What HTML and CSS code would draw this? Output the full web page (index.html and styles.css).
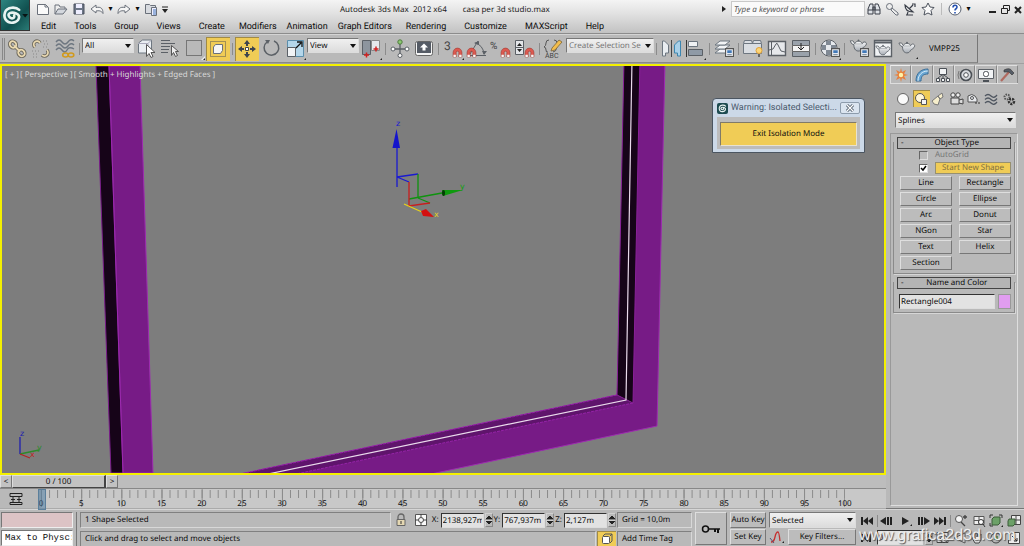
FILE: index.html
```html
<!DOCTYPE html>
<html lang="en">
<head>
<meta charset="utf-8">
<title>Autodesk 3ds Max 2012 x64 - casa per 3d studio.max</title>
<link rel="stylesheet" href="styles.css">
</head>
<body>
<svg class="defs" aria-hidden="true">
  <defs>
    <linearGradient id="steel" x1="0" y1="0" x2="0" y2="1"><stop offset="0" stop-color="#fff"/><stop offset="1" stop-color="#a6acb4"/></linearGradient>
    <symbol id="magnet" viewBox="0 0 10 10"><path d="M1 9V5a4 4 0 0 1 8 0v4H6.200V5a1.200 1.200 0 0 0-2.400 0v4z" fill="#dc5a50" stroke="#9c3029" stroke-width=".5"/><path d="M1.300 7h2.200V9H1.300zM6.500 7h2.200V9H6.500z" fill="#f4f4f4"/></symbol>
    <symbol id="teapot" viewBox="0 0 20 14"><path d="M5 6C2 6 2 3 1 2l3 0 2 3h8c1-3 5-2 4.500.5S15 9 14 10c-1 2-2 3-4 3s-5-1-5-7z" fill="url(#steel)" stroke="#5b6168"/><path d="M6 5c1-3.500 7-3.500 8 0" fill="#eef0f2" stroke="#5b6168"/><circle cx="10" cy="1.500" r="1" fill="#5b6168"/></symbol>
    <symbol id="swirl" viewBox="0 0 20 20"><path d="M17 4.500C14 1.500 5 1 3 7s2 11 8 10 8-7 3-9-9 0-7 3 6 2 5-1" fill="none" stroke="#e8f3f1" stroke-width="2.600" stroke-linecap="round"/></symbol>
    <symbol id="doc" viewBox="0 0 8 8"><path d="M.5.5h7v7h-7z" fill="#eef1f5" stroke="#555"/><path d="M2 2h4v2.500H2z" fill="#4279b8"/><path d="M2 6h4" stroke="#456" stroke-width=".7"/></symbol>
  </defs>
</svg>

<header class="header">
  <button class="app-button" aria-label="Application menu"><svg class="app-logo" viewBox="0 0 29 30"><use href="#swirl" x="1" y="5" width="21" height="21"/><path d="M22 14h6l-3 3.500z" fill="#081414"/></svg></button>
  <div class="header-main">
    <div class="title-row">
      <div class="quick">
        <button aria-label="New"><svg viewBox="0 0 16 16"><path d="M2.500 3.500h8l3 3v7h-11z" fill="#fafafa" stroke="#6a707a"/><path d="M10 3v3h3" fill="none" stroke="#6a707a"/></svg></button>
        <button aria-label="Open"><svg viewBox="0 0 16 16"><path d="M2 13V4h4l1 2h5v3" fill="#eee" stroke="#6a707a"/><path d="M2 13l3-5h9l-4 5z" fill="#d4d8de" stroke="#6a707a"/></svg></button>
        <button aria-label="Save"><svg viewBox="0 0 16 16"><path d="M3 3h10v10H3z" fill="#6c7686" stroke="#4a515e"/><path d="M5 3h6v4H5zM5 9h6v4H5z" fill="#eef"/></svg></button>
        <button aria-label="Undo"><svg viewBox="0 0 16 16"><path d="M2 8l5-4v2.500c5-1 7 1 7 6-2-3-4-3-7-2.500V12z" fill="#f6f6f6" stroke="#6a707a"/></svg></button>
        <button class="drop" aria-label="Undo list">▾</button>
        <button aria-label="Redo"><svg viewBox="0 0 16 16"><path d="M14 8L9 4v2.500c-5-1-7 1-7 6 2-3 4-3 7-2.500V12z" fill="#f6f6f6" stroke="#6a707a"/></svg></button>
        <button class="drop" aria-label="Redo list">▾</button>
        <button aria-label="Project folder"><svg viewBox="0 0 16 16"><path d="M2.500 3.500h4l1 1h5v8h-10z" fill="#d8dbe0" stroke="#6a707a"/><path d="M8.500 6.500h5v8h-5z" fill="#eef" stroke="#6a707a"/><path d="M10 9h3M10 11h3M10 13h3" stroke="#47b"/></svg></button>
        <button class="drop" aria-label="Customize quick access"><svg viewBox="0 0 10 16"><path d="M2 6h6" stroke="#222"/><path d="M2 8h6l-3 4z" fill="#222"/></svg></button>
      </div>
      <h1 class="title"><span>Autodesk 3ds Max&nbsp; 2012 x64</span><span>casa per 3d studio.max</span></h1>
      <div class="search">
        <svg class="search-arrow" viewBox="0 0 6 10"><path d="M1 2l4 3-4 3z" fill="#222"/></svg>
        <input class="search-box" type="text" placeholder="Type a keyword or phrase" aria-label="Search">
        <button aria-label="Find"><svg viewBox="0 0 16 16"><path d="M4 3h3v10H2V8zM9 3h3l2 5v5H9zM7 6h2v3H7z" fill="#dfe3e8" stroke="#3a3f49"/><path d="M2 9h5M9 9h5" stroke="#3a3f49"/></svg></button>
        <button aria-label="Subscription"><svg viewBox="0 0 16 16"><circle cx="5.500" cy="5.500" r="3" fill="#eee" stroke="#6a707a"/><path d="M8 7l6 5v2h-2L7 9z" fill="#eee" stroke="#6a707a"/></svg></button>
        <button aria-label="Communication"><svg viewBox="0 0 16 16"><path d="M3 4c0 6 4 7 8 7zM7 8l4-4M4 14h7M6 11l-1 3M10 3h3v3" fill="#eee" stroke="#3a3f49" stroke-width="1.200"/></svg></button>
        <button aria-label="Favorites"><svg viewBox="0 0 16 16"><path d="M8 2l2 4 4 .500-3 3 1 4.500-4-2-4 2 1-4.500-3-3L6 6z" fill="#fafafa" stroke="#4c525c"/></svg></button>
        <span class="thin-rule"></span>
        <button aria-label="Help"><svg viewBox="0 0 16 16"><circle cx="8" cy="8" r="6" fill="#fff" stroke="#5a6270"/><path d="M6 6.500c0-3 4-3 4-.5C10 8 8 7.500 8 9.500M8 11v1.500" fill="none" stroke="#2450b0" stroke-width="1.600"/></svg></button>
        <button class="drop" aria-label="Help menu">▾</button>
        <div class="window-buttons">
          <button aria-label="Minimize"><svg viewBox="0 0 12 16"><path d="M3 11h7" stroke="#222" stroke-width="2"/></svg></button>
          <button aria-label="Restore"><svg viewBox="0 0 12 16"><path d="M4.500 7V4.500h6v5H8M2.500 7.500h6v5h-6z" fill="none" stroke="#222"/></svg></button>
          <button aria-label="Close"><svg viewBox="0 0 12 16"><path d="M3 6l6 6M9 6l-6 6" stroke="#222" stroke-width="2"/></svg></button>
        </div>
      </div>
    </div>
    <nav class="menu">
      <button>Edit</button><button>Tools</button><button>Group</button><button>Views</button><button>Create</button><button class="tight">Modifiers</button><button class="tight">Animation</button><button class="tight">Graph Editors</button><button>Rendering</button><button>Customize</button><button>MAXScript</button><button>Help</button>
    </nav>
  </div>
</header>

<div class="toolbar-row">
<div class="toolbar">
  <span class="grip"></span>
  <button class="tool" aria-label="Link"><svg viewBox="0 0 24 24"><g fill="none" stroke="#6b675c" stroke-width="3.600"><ellipse cx="8" cy="7.500" rx="3" ry="3.500" transform="rotate(-45 8 7.500)"/><ellipse cx="16.500" cy="16" rx="3" ry="3.500" transform="rotate(-45 16.500 16)"/><path d="M9 8.500l6 6"/></g><g fill="none" stroke="#ead9b0" stroke-width="1.800"><ellipse cx="8" cy="7.500" rx="3" ry="3.500" transform="rotate(-45 8 7.500)"/><ellipse cx="16.500" cy="16" rx="3" ry="3.500" transform="rotate(-45 16.500 16)"/><path d="M9 8.500l6 6"/></g></svg></button>
  <button class="tool" aria-label="Unlink"><svg viewBox="0 0 24 24"><g fill="none" stroke="#6b675c" stroke-width="3.400"><path d="M6 10a3.300 3.300 0 1 1 5-4M13 18a3.300 3.300 0 1 0 5-5"/></g><g fill="none" stroke="#ead9b0" stroke-width="1.700"><path d="M6 10a3.300 3.300 0 1 1 5-4M13 18a3.300 3.300 0 1 0 5-5"/></g><path d="M14 4h6M15 7h6M14 10h6M3 14h7M4 17h6M4 20h6" stroke="#888" stroke-dasharray="1 2"/></svg></button>
  <button class="tool" aria-label="Bind to space warp"><svg viewBox="0 0 24 24"><path d="M3 5q3-4 6 0t6 0 6-1M3 9q3-4 6 0t6 0 6-1M3 13q3-4 6 0t5 0 7-1" fill="none" stroke="#6d7680" stroke-width="1.400"/><g fill="none" stroke="#d29a1c" stroke-width="1.600"><ellipse cx="12.500" cy="18" rx="2.800" ry="2"/><ellipse cx="18" cy="18" rx="2.800" ry="2"/></g></svg></button>
  <span class="sep"></span>
  <select class="combo filter" aria-label="Selection filter"><option>All</option></select>
  <button class="tool" aria-label="Select object"><svg viewBox="0 0 24 24"><path d="M4.500 6l4-3h9v9l-3 4h-10z" fill="#e9edf1" stroke="#6d7680"/><path d="M4 6.500h10v9M14 6.500l3-3" fill="none" stroke="#aab"/><path d="M12.500 7.500v12l2.500-3 2 4 2-1-2-4h4z" fill="#fff" stroke="#555"/></svg></button>
  <button class="tool" aria-label="Select by name"><svg viewBox="0 0 24 24"><path d="M3 3.500h9M3 6.500h14M3 9.500h9M3 12.500h8M3 15.500h7" stroke="#5b6066"/><path d="M13.500 8.500v10l2-3 2 4 2-1-2-4h3z" fill="#eee" stroke="#555"/></svg></button>
  <button class="tool" aria-label="Rectangular selection region"><svg viewBox="0 0 24 24"><path d="M4.500 3.500h15v15h-15z" fill="none" stroke="#333" stroke-dasharray="1 1"/><path d="M23 19v4h-4z" fill="#eee"/><path d="M23 21v2h-2z" fill="#222"/></svg></button>
  <button class="tool on" aria-label="Window crossing" aria-pressed="true"><svg viewBox="0 0 24 24"><path d="M4.500 4.500h15v15h-15z" fill="none" stroke="#555" stroke-dasharray="1 1"/><path d="M7.500 10l2-2.500h7v6l-2 3h-7z" fill="#f6f6f6" stroke="#6a707a"/></svg></button>
  <span class="sep"></span>
  <button class="tool on" aria-label="Move" aria-pressed="true"><svg viewBox="0 0 24 24"><path d="M12 3l3 4h-2v2h-2V7H9zM12 21l3-4h-2v-2h-2v2H9zM3 12l4-3v2h2v2H7v2zM21 12l-4-3v2h-2v2h2v2z" fill="#3d444e"/><path d="M10.500 10.500h3v3h-3z" fill="#fff" stroke="#444"/></svg></button>
  <button class="tool" aria-label="Rotate"><svg viewBox="0 0 24 24"><path d="M8 5a7.300 7.300 0 1 0 7-1" fill="none" stroke="#5b6066" stroke-width="1.500"/><path d="M6 3l5 0-2 4z" fill="#5b6066"/></svg></button>
  <button class="tool" aria-label="Scale"><svg viewBox="0 0 24 24"><path d="M4.500 3.500h16v16h-16z" fill="#b4d6ea" stroke="#5b8eac"/><path d="M4.500 10.500h8v9h-8z" fill="#f1f3f5" stroke="#5b6066"/><path d="M13 11l5-5M14 5h5v5" fill="none" stroke="#111" stroke-width="1.300"/><path d="M23 21v2h-2z" fill="#222"/></svg></button>
  <select class="combo filter" aria-label="Reference coordinate system"><option>View</option></select>
  <button class="tool" aria-label="Use pivot point center"><svg viewBox="0 0 24 24"><path d="M3.500 3.500h8v14h-8z" fill="#8d959e" stroke="#5b6066"/><path d="M12.500 3.500h8v10h-8z" fill="#e5e8ec" stroke="#888"/><path d="M5 18h5M7.500 15.500v5M14.500 12h5M17 9.500v5" stroke="#d02020" stroke-width="1.500"/><path d="M23 21v2h-2z" fill="#222"/></svg></button>
  <span class="sep"></span>
  <button class="tool" aria-label="Select and manipulate"><svg viewBox="0 0 24 24"><path d="M12 6v6H5M12 12h7M12 12v7" fill="none" stroke="#5b6066" stroke-width="1.300"/><g fill="#fff" stroke="#5b6066"><circle cx="5" cy="12" r="2"/><circle cx="19" cy="12" r="2"/><circle cx="12" cy="18.500" r="2"/></g><circle cx="12" cy="5" r="2.200" fill="#8cc872" stroke="#4f7c3e"/></svg></button>
  <button class="tool" aria-label="Keyboard shortcut override"><svg viewBox="0 0 24 24"><rect x="3.500" y="4.500" width="17" height="14" rx="2" fill="#f4f4f4" stroke="#666"/><rect x="5" y="5" width="14" height="11" fill="#555b65"/><path d="M12 6.500l4 4h-2.500v3h-3v-3H8z" fill="#fff"/></svg></button>
  <span class="sep"></span>
  <button class="tool" aria-label="Snaps toggle"><svg viewBox="0 0 24 24"><text x="3" y="13" class="glyph">3</text><use href="#magnet" x="11" y="10" width="11" height="11"/><path d="M23 21v2h-2z" fill="#222"/></svg></button>
  <button class="tool" aria-label="Angle snap"><svg viewBox="0 0 24 24"><path d="M3 18.500h18M5 17L13 4M10 6q8 2 9 11" fill="none" stroke="#5b6066"/><path d="M9 6l5-2v4zM17 14l2 4 3-4z" fill="#5b6066"/><use href="#magnet" x="1" y="10" width="11" height="11"/></svg></button>
  <button class="tool" aria-label="Percent snap"><svg viewBox="0 0 24 24"><text x="1" y="12" class="glyph small">%</text><use href="#magnet" x="11" y="10" width="11" height="11"/></svg></button>
  <button class="tool" aria-label="Spinner snap"><svg viewBox="0 0 24 24"><path d="M2.500 3.500h8v14h-8zM2 10.500h9" fill="#e4e6e9" stroke="#5b6066"/><path d="M4 9l2.500-3 2.500 3zM4 12l2.500 3 2.500-3z" fill="#222"/><use href="#magnet" x="11" y="10" width="11" height="11"/></svg></button>
  <span class="sep"></span>
  <button class="tool" aria-label="Edit named selection sets"><svg viewBox="0 0 24 24"><path d="M7 3q-3 0-3 3t-2 4q2 0 2 3t2 2M12 3q3 0 3 3M15 10q-1 5-4 5" fill="none" stroke="#555"/><path d="M10 11l7-8 3 2-7 8-4 1z" fill="#f3bd4c" stroke="#7b6538" stroke-width=".8"/><text x="3" y="21" class="glyph tiny">ABC</text></svg></button>
  <select class="combo named-sets" aria-label="Named selection sets"><option>Create Selection Se</option></select>
  <span class="sep"></span>
  <button class="tool" aria-label="Mirror"><svg viewBox="0 0 24 24"><path d="M3.500 4h2l4 4v8h-3v3h-3z" fill="#e9edf1" stroke="#6d7680"/><path d="M12.500 3v17" stroke="#444"/><path d="M21.500 4h-2l-4 4v8h3v3h3z" fill="#a9d0e8" stroke="#3d86b0"/></svg></button>
  <button class="tool" aria-label="Align"><svg viewBox="0 0 24 24"><path d="M3.500 3v17" stroke="#333"/><path d="M5.500 4.500h9v5h-9z" fill="#f1f3f5" stroke="#6d7680"/><path d="M5.500 12.500h14v6h-14z" fill="#8f9aa6" stroke="#5b6066"/><path d="M23 21v2h-2z" fill="#222"/></svg></button>
  <span class="sep"></span>
  <button class="tool" aria-label="Layers"><svg viewBox="0 0 24 24"><g fill="#f1f3f5" stroke="#6d7680"><path d="M3 16l5-4h10l-5 4z"/><path d="M3 12l5-4h10l-5 4z"/><path d="M3 8l5-4h10l-5 4z"/></g><use href="#doc" x="13" y="11" width="9" height="9"/></svg></button>
  <span class="sep"></span>
  <button class="tool" aria-label="Ribbon"><svg viewBox="0 0 24 24"><path d="M2.500 6.500l1-3h7l1 3 1-3h7l1 3v10h-18z" fill="#d9dde2" stroke="#6d7680"/><path d="M3 6.500h17" stroke="#6d7680"/><circle cx="18" cy="13.500" r="3" fill="#fcd577" stroke="#e0a23a"/><path d="M18 17v3" stroke="#666" stroke-width="2"/></svg></button>
  <button class="tool" aria-label="Curve editor"><svg viewBox="0 0 24 24"><path d="M3.500 4.500h17v14h-17z" fill="#e6e8eb" stroke="#5b6066" stroke-width="1.400"/><path d="M6.500 5v13M4 13l4-1 3-5q1-2 2 1l3 6 4 1" fill="none" stroke="#5b6066"/></svg></button>
  <button class="tool" aria-label="Schematic view"><svg viewBox="0 0 24 24"><path d="M3.500 3.500h17v5h-17zM3.500 14.500h17v5h-17z" fill="#9aa2ab" stroke="#5b6066"/><path d="M3.500 8.500h17v6h-17z" fill="#f4f4f4" stroke="#666"/><path d="M12 6v6M9 10l3 3 3-3" fill="none" stroke="#222"/></svg></button>
  <span class="sep"></span>
  <button class="tool" aria-label="Material editor"><svg viewBox="0 0 24 24"><circle cx="11" cy="11" r="8" fill="#e6e9ed" stroke="#5b6066"/><path d="M8 4h5v4H8zM4 8h4v5H4zM13 8h5v5h-5zM8 13h5v5H8z" fill="#808994"/><use href="#doc" x="13" y="11" width="9" height="9"/><path d="M23 21v2h-2z" fill="#222"/></svg></button>
  <span class="sep"></span>
  <button class="tool" aria-label="Render setup"><svg viewBox="0 0 24 24"><use href="#teapot" x="2" y="2" width="19" height="13"/><use href="#doc" x="13" y="11" width="9" height="9"/></svg></button>
  <button class="tool" aria-label="Rendered frame window"><svg viewBox="0 0 24 24"><path d="M3.500 3.500h17v16h-17z" fill="#f1f3f5" stroke="#5b6066" stroke-width="1.400"/><path d="M4 4.500h16v2H4z" fill="#5b6066"/><use href="#teapot" x="4" y="7" width="16" height="12"/></svg></button>
  <button class="tool" aria-label="Render production"><svg viewBox="0 0 24 24"><use href="#teapot" x="3" y="4" width="18" height="13"/><path d="M23 20v2h-2z" fill="#222"/></svg></button>
  <button class="script-button">VMPP25</button>
</div>
</div>

<main class="workspace">
  <div class="stage">
    <section class="viewport">
      <svg class="scene" viewBox="2 66 882 407" preserveAspectRatio="xMidYMid slice" role="img" aria-label="Perspective view of window frame">
        <path d="M109 66h31l13 407h-30z" fill="#771b86" stroke="#9d2bb0"/>
        <path d="M96 66h13l14 407h-12z" fill="#160418" stroke="#7a1c8a"/>
        <path d="M109 66l14 407" stroke="#9d2bb0"/>
        <path d="M640 60h25l-8 366-226 48H240L617 395z" fill="#771b86" stroke="#9d2bb0"/>
        <path d="M617 395l16 8-337 71h-56z" fill="#5f146c"/>
        <path d="M617 395L240 474M633 403L296 474" stroke="#9423a6" stroke-dasharray="3 1"/>
        <path d="M624 60h16l-7 343-16-8z" fill="#160418" stroke="#8a2299"/>
        <path d="M632 60l-6 340L268 474" fill="none" stroke="#eadbec" stroke-width="1.200"/>
        <g fill="none" stroke-width="1.300">
          <path d="M397 148v39M397 177l21-3M397 177l12 5" stroke="#1a1ad0"/>
          <path d="M418 174v24M409 199l33-6M418 198l12 5" stroke="#0f930f"/>
          <path d="M409 182v24l21-3" stroke="#c81e1e"/>
          <path d="M404 204l18 8" stroke="#e6d21c"/>
          <path d="M20 437v17" stroke="#2020b0"/><path d="M20 454l19-4" stroke="#2c8a2c"/><path d="M20 454l10 4" stroke="#b42222"/>
        </g>
        <path d="M396.500 129l-4 19h7.500z" fill="#1414cc"/>
        <path d="M442 190l21 0-20 6z" fill="#0f9a0f"/><ellipse cx="443.500" cy="193" rx="1.500" ry="3" fill="#063d06"/>
        <path d="M421 211l5-2 8 8-11-1z" fill="#d41010"/>
        <g class="axis"><text x="396" y="126" fill="#1a1ad0">z</text><text x="460" y="189" fill="#12a012">y</text><text x="434" y="217" fill="#e6d21c">x</text><text x="20" y="436" fill="#2020b0">z</text><text x="37" y="450" fill="#2c8a2c">y</text><text x="30" y="457" fill="#c02020">x</text></g>
      </svg>
      <div class="view-label"><button>[ + ]</button><button>[ Perspective ]</button><button>[ Smooth + Highlights + Edged Faces ]</button></div>
      <div class="dialog" role="dialog" aria-labelledby="dialog-title">
        <div class="dialog-bar">
          <span class="dialog-icon"><svg viewBox="0 0 20 20"><use href="#swirl" x="2" y="2" width="16" height="16"/></svg></span>
          <h2 class="dialog-title" id="dialog-title">Warning: Isolated Selecti...</h2>
          <button class="dialog-close" aria-label="Close"><svg viewBox="0 0 12 10"><path d="M3 2l6 6M9 2L3 8" stroke="#4d5a68" stroke-width="3"/><path d="M3 2l6 6M9 2L3 8" stroke="#fff" stroke-width="1.200"/></svg></button>
        </div>
        <div class="dialog-body"><button class="exit">Exit Isolation Mode</button></div>
      </div>
    </section>
    <div class="time-slider"><button class="step" aria-label="Previous frame">&lt;</button><button class="thumb">0 / 100</button><button class="step" aria-label="Next frame">&gt;</button></div>
    <div class="track">
      <button class="track-toggle" aria-label="Open mini curve editor"><svg viewBox="0 0 16 14"><path d="M2 1.500h12v3H2zM2 10.500h12v2H2zM5 5v5M11 5v5M3 7.500h4M9 7.500h4" fill="none" stroke="#222"/></svg></button>
      <div class="ruler">
        <svg class="ticks" aria-hidden="true"><line class="minor" x1="0" y1="5" x2="100%" y2="5" pathLength="1001"/><line class="major" x1="0" y1="9" x2="100%" y2="9" pathLength="1001"/></svg>
        <div class="numbers"><span class="current">0</span><span>5</span><span>10</span><span>15</span><span>20</span><span>25</span><span>30</span><span>35</span><span>40</span><span>45</span><span>50</span><span>55</span><span>60</span><span>65</span><span>70</span><span>75</span><span>80</span><span>85</span><span>90</span><span>95</span><span>100</span></div>
      </div>
    </div>
  </div>

  <aside class="panel">
    <div class="tabs">
      <button class="tab active" aria-label="Create"><svg viewBox="0 0 18 16"><path d="M9 1l1 4 4-2-2 4 4 1-4 1 2 4-4-2-1 4-1-4-4 2 2-4-4-1 4-1-2-4 4 2z" fill="#e8803c"/><circle cx="9" cy="8" r="2.200" fill="#fff2a8"/></svg></button>
      <button class="tab" aria-label="Modify"><svg viewBox="0 0 18 16"><path d="M3 14C3 6 8 2 15 2v5c-5 0-7 2-7 7z" fill="#6aa7d4" stroke="#3c6f98"/><path d="M5 14C5 8 9 4 15 4" fill="none" stroke="#d8ecf8"/></svg></button>
      <button class="tab" aria-label="Hierarchy"><svg viewBox="0 0 18 16"><path d="M5.500 1.500h7v6h-7zM2.500 11.500h3v3h-3zM7.500 11.500h3v3h-3zM12.500 11.500h3v3h-3z" fill="#f1f3f5" stroke="#4b5056"/><path d="M9 8v3M4 11l4-3M14 11l-4-3" stroke="#4b5056"/></svg></button>
      <button class="tab" aria-label="Motion"><svg viewBox="0 0 18 16"><circle cx="10" cy="8" r="5.500" fill="#d8dbe0" stroke="#4b5056" stroke-width="1.600"/><circle cx="10" cy="8" r="2.300" fill="#fff" stroke="#4b5056"/><path d="M3 4Q1 8 3 12" fill="none" stroke="#777"/></svg></button>
      <button class="tab" aria-label="Display"><svg viewBox="0 0 18 16"><path d="M1.500 2.500h15v9h-15z" fill="#f1f3f5" stroke="#5b6066"/><rect x="6.500" y="4.500" width="5" height="5" rx="2" fill="#fff" stroke="#4b5056"/><path d="M6 14h6" stroke="#4b5056" stroke-width="2"/></svg></button>
      <button class="tab" aria-label="Utilities"><svg viewBox="0 0 18 16"><path d="M3 14l8-9" stroke="#b06a60" stroke-width="2.200"/><path d="M6 3q6-3 8 1l2 2-2 2-3-3-5 0z" fill="#555c66" stroke="#333" stroke-width=".6"/></svg></button>
    </div>
    <div class="kinds">
      <button aria-label="Geometry"><svg viewBox="0 0 16 16"><circle cx="8" cy="8" r="5.500" fill="#fafafa" stroke="#666"/></svg></button>
      <button class="on" aria-label="Shapes"><svg viewBox="0 0 16 16"><circle cx="7" cy="7" r="4.500" fill="#fff6d8" stroke="#555"/><path d="M8.500 8.500h5v5h-5z" fill="#f4f4f4" stroke="#555"/></svg></button>
      <button aria-label="Lights"><svg viewBox="0 0 16 16"><path d="M12 2l1 4-3 2-2-3zM8 5L2 10q1 4 6 4l2-6z" fill="#f6eecb" stroke="#777"/></svg></button>
      <button aria-label="Cameras"><svg viewBox="0 0 16 16"><circle cx="5" cy="4" r="2.200" fill="#eee" stroke="#444"/><circle cx="10" cy="4" r="2.200" fill="#eee" stroke="#444"/><path d="M3 7h8v6H3zM11 9l4-1v5l-4-1" fill="#ddd" stroke="#444"/></svg></button>
      <button aria-label="Helpers"><svg viewBox="0 0 16 16"><path d="M2 11V5q4-3 7 0l2 3v3z" fill="#e8eaed" stroke="#555"/><circle cx="6" cy="7" r="1.500" fill="none" stroke="#555"/><path d="M9 12h6" stroke="#333" stroke-dasharray="2 1"/></svg></button>
      <button aria-label="Space warps"><svg viewBox="0 0 16 16"><path d="M2 5q3-3 6 0t6-1M2 8.500q3-3 6 0t6-1M2 12q3-3 6 0t6-1" fill="none" stroke="#4f5660" stroke-width="1.300"/></svg></button>
      <button aria-label="Systems"><svg viewBox="0 0 16 16"><circle cx="6" cy="6" r="2.500" fill="none" stroke="#555" stroke-width="2" stroke-dasharray="1.500 1"/><circle cx="10.500" cy="10.500" r="2.500" fill="#bbb" stroke="#333" stroke-width="2.500" stroke-dasharray="2 1"/></svg></button>
    </div>
    <select class="combo category" aria-label="Category"><option>Splines</option></select>
    <div class="rollouts">
      <section class="rollout">
        <h3 class="rollout-head"><button><span>-</span>Object Type</button></h3>
        <div class="options">
          <input type="checkbox" id="autogrid" class="tick" disabled><label for="autogrid" class="dim">AutoGrid</label>
          <input type="checkbox" id="newshape" class="tick" checked><label for="newshape" class="start">Start New Shape</label>
        </div>
        <div class="types"><button>Line</button><button>Rectangle</button><button>Circle</button><button>Ellipse</button><button>Arc</button><button>Donut</button><button>NGon</button><button>Star</button><button>Text</button><button>Helix</button><button>Section</button></div>
      </section>
      <section class="rollout">
        <h3 class="rollout-head"><button><span>-</span>Name and Color</button></h3>
        <div class="name-row"><input type="text" class="field name" value="Rectangle004" aria-label="Object name"><button class="swatch" aria-label="Object color"></button></div>
      </section>
    </div>
  </aside>
</main>

<footer class="status">
  <div class="listener"><input class="pink" type="text" aria-label="Macro recorder"><input class="script" type="text" value="Max to Physc:" aria-label="Script listener"></div>
  <div class="messages">
    <div class="line">
      <output class="pane grow">1 Shape Selected</output>
      <button class="mini" aria-label="Selection lock"><svg viewBox="0 0 14 14"><path d="M4 7V4a3 3 0 0 1 6 0v3" fill="none" stroke="#666" stroke-width="1.300"/><path d="M3 6.500h8v6H3z" fill="#e4d7b2" stroke="#666"/><path d="M7 8v3" stroke="#333"/></svg></button>
      <button class="mini" aria-label="Absolute mode"><svg viewBox="0 0 14 14"><path d="M1.500 1.500h11v11h-11z" fill="#fafafa" stroke="#555"/><circle cx="7" cy="7" r="2.500" fill="none" stroke="#444"/><path d="M7 1v3M7 10v3M1 7h3M10 7h3" stroke="#444"/></svg></button>
      <label class="coord">X:<input class="field" type="text" value="2138,927m"></label><span class="spin"><button aria-label="X up"></button><button aria-label="X down"></button></span>
      <label class="coord">Y:<input class="field" type="text" value="767,937m"></label><span class="spin"><button aria-label="Y up"></button><button aria-label="Y down"></button></span>
      <label class="coord">Z:<input class="field" type="text" value="2,127m"></label><span class="spin"><button aria-label="Z up"></button><button aria-label="Z down"></button></span>
      <output class="pane side">Grid = 10,0m</output>
    </div>
    <div class="line">
      <output class="pane grow">Click and drag to select and move objects</output>
      <button class="mini on" aria-label="Isolate"><svg viewBox="0 0 14 14"><rect x="2.500" y="4.500" width="7" height="7" rx="1" fill="#fff" stroke="#555"/><path d="M3 4l2-2h7v7l-2 2M10 4l2-2" fill="none" stroke="#555"/></svg></button>
      <button class="pane side">Add Time Tag</button>
    </div>
  </div>
  <button class="set-keys" aria-label="Set keys"><svg viewBox="0 0 20 12"><circle cx="4.500" cy="6" r="3" fill="none" stroke="#111" stroke-width="1.500"/><path d="M8 6h11" stroke="#111" stroke-width="1.500"/><path d="M14 6v3M17 6v4" stroke="#111" stroke-width="2"/></svg></button>
  <div class="keys">
    <button>Auto Key</button>
    <select class="combo" aria-label="Key selection set"><option>Selected</option></select>
    <button>Set Key</button>
    <div class="key-tools"><button class="plain" aria-label="Default tangents"><svg viewBox="0 0 16 14"><path d="M2 12q3 0 4-5t3-5q1 0 2 9" fill="none" stroke="#c62f2f" stroke-width="1.300"/><path d="M1 8l4 5" stroke="#557"/><path d="M15 11v2h-2z" fill="#222"/></svg></button><button class="filters">Key Filters...</button></div>
  </div>
  <div class="playback">
    <div class="transport">
      <button aria-label="Go to start"><svg viewBox="0 0 16 12"><path d="M2 2h2v8H2zM9 2v8L4 6zM14 2v8L9 6z" fill="#222"/></svg></button>
      <span class="sep"></span>
      <button aria-label="Previous frame"><svg viewBox="0 0 16 12"><path d="M7 2v8L1 6zM8 2h2v8H8zM11 2h2v8h-2z" fill="#222"/></svg></button>
      <button aria-label="Play"><svg viewBox="0 0 16 12"><path d="M5 2v8l7-4z" fill="#222"/><path d="M15 9v2h-2z" fill="#222"/></svg></button>
      <button aria-label="Next frame"><svg viewBox="0 0 16 12"><path d="M9 2v8l6-4zM6 2h2v8H6zM3 2h2v8H3z" fill="#222"/></svg></button>
      <button aria-label="Go to end"><svg viewBox="0 0 16 12"><path d="M12 2h2v8h-2zM2 2v8l5-4zM7 2v8l5-4z" fill="#222"/></svg></button>
      <span class="sep"></span>
      <button aria-label="Zoom"><svg viewBox="0 0 16 14"><circle cx="6" cy="5" r="3.500" fill="#f4f4f4" stroke="#555"/><path d="M8 8l4 4M10 3h4M12 1v4" stroke="#444" stroke-width="1.300"/></svg></button>
      <button aria-label="Zoom all"><svg viewBox="0 0 16 14"><path d="M3 2.500h10v8H3zM8 2v9M3 6.500h10" fill="#eee" stroke="#555"/><circle cx="10" cy="8" r="2.500" fill="#fff" stroke="#333"/><path d="M12 10l2 3" stroke="#333"/></svg></button>
      <button aria-label="Zoom extents"><svg viewBox="0 0 16 14"><path d="M2 4V1h3M11 1h3v3M2 9v3h3" fill="none" stroke="#333"/><path d="M4 5l2-2h6v6l-2 2H4z" fill="#6ca168" stroke="#3c5c3a"/><path d="M15 11v2h-2z" fill="#222"/></svg></button>
      <button aria-label="Zoom extents all"><svg viewBox="0 0 16 14"><path d="M5.500 1.500h9v9h-9zM10 1v9M6 6h9" fill="#eee" stroke="#444"/><path d="M2 7l1-2h6v5l-2 2H2z" fill="#6ca168" stroke="#3c5c3a"/></svg></button>
    </div>
    <div class="transport lower">
      <button aria-label="Key mode"><svg viewBox="0 0 16 12"><path d="M2 2h2v8H2zM9 2v8L4 6zM10 2h2v8h-2z" fill="#222"/></svg></button>
      <input class="field frame" type="text" value="0" aria-label="Current frame">
      <span class="spin"><button aria-label="Frame up"></button><button aria-label="Frame down"></button></span>
      <button aria-label="Time configuration"><svg viewBox="0 0 16 14"><path d="M2 1.500h11v10H2z" fill="#ddd" stroke="#444"/><circle cx="9" cy="8" r="3.500" fill="#eee" stroke="#333"/></svg></button>
      <button aria-label="Field of view"><svg viewBox="0 0 16 14"><path d="M2 7l11-5v10z" fill="#ddd" stroke="#555"/></svg></button>
      <button aria-label="Pan"><svg viewBox="0 0 16 14"><path d="M5 12L2 7l2-1 1 2V2h2v4l1-4h1v4l2-3v6l-2 3z" fill="#eee" stroke="#444"/></svg></button>
      <button aria-label="Orbit"><svg viewBox="0 0 16 14"><circle cx="8" cy="7" r="5" fill="none" stroke="#444"/><path d="M6 5h4v4H6z" fill="#5c9158"/></svg></button>
      <button aria-label="Maximize viewport"><svg viewBox="0 0 16 14"><path d="M2.500 1.500h11v11h-11z" fill="#eee" stroke="#444"/><path d="M6 5l5 5M11 7v3H8" fill="none" stroke="#222"/></svg></button>
    </div>
    <div class="watermark">www.grafica2d3d.com</div>
  </div>
</footer>
</body>
</html>
```
FILE: styles.css
```css
:root {
  --ui: "Noto Sans", "Open Sans", sans-serif;
  --menu: Roboto, "Noto Sans", sans-serif;
  --face: #b9b9b9;
  --light: #dedede;
  --yellow: #f0cc56;
}
* { box-sizing: border-box; }
body {
  margin: 0;
  min-height: 100vh;
  display: flex;
  flex-direction: column;
  background: var(--face);
  color: #0c0c0c;
  font: 8px/12px var(--ui);
  text-rendering: geometricPrecision;
}
button, input, select { font: inherit; color: inherit; margin: 0; padding: 0; border: 0; background: none; border-radius: 0; min-width: 0; white-space: nowrap; text-rendering: inherit; }
button svg { display: block; }
h1, h2, h3 { margin: 0; font: inherit; }
.defs { position: absolute; width: 0; height: 0; }

.header { display: flex; height: 34px; background: linear-gradient(#f4f4f4, #e2e2e2 40%, #c2c2c2); border-bottom: 1px solid #8c8c8c; }
.app-button { width: 30px; height: 31px; background: linear-gradient(135deg, #2d8480, #10504f 60%, #2a7a75); border: 1px solid #333; border-top: 0; }
.app-logo { width: 28px; height: 30px; }
.header-main { flex: 1; display: flex; flex-direction: column; }
.title-row { flex: none; display: flex; align-items: center; height: 18px; }
.quick { display: flex; padding-left: 4px; width: 310px; }
.quick button { width: 18px; }
.quick svg, .search button svg { height: 16px; width: 16px; margin: auto; }
.quick .drop, .search .drop { width: 9px; }
.quick .drop svg { width: 10px; }
.title { display: flex; gap: 16px; flex: 1; color: #222; padding-top: 1px; }
.search { display: flex; align-items: center; }
.search-arrow { width: 6px; height: 10px; margin-right: 4px; }
.search-box { width: 134px; height: 16px; padding: 0 2px; background: #fafafa; border: 1px solid #c9c9c9; font-style: italic; }
.search-box::placeholder { color: #555; opacity: 1; }
.search > button { width: 18px; }
.thin-rule { width: 1px; height: 12px; background: #bbb; margin: 0 4px; }
.window-buttons { display: flex; padding-left: 12px; }
.window-buttons button { width: 13px; }
.search .window-buttons svg { width: 12px; }
.menu { display: flex; align-items: center; padding: 3px 0 0 2px; font: 9px/12px var(--menu); }
.menu button { padding: 0 9px; }
.menu .tight { padding: 0 5px; }

.toolbar-row { display: flex; height: 30px; border-bottom: 1px solid #a0a0a0; }
.toolbar { display: flex; align-items: center; width: 978px; border-right: 1px solid #777; border-bottom: 1px solid #888; border-top: 1px solid #d4d4d4; }
.grip { width: 3px; height: 22px; margin: 0 0 0 2px; border-left: 1px solid #888; border-right: 1px solid #888; }
.tool { flex: none; width: 24px; height: 24px; }
.tool svg { width: 24px; height: 24px; }
.on { background: var(--yellow); box-shadow: inset 1px 1px #a08a45; }
.sep { flex: none; width: 1px; height: 12px; background: #8b8b8b; margin: 0 2px; }
.glyph { font: 12px var(--menu); fill: #444; }
.glyph.small { font-size: 10px; }
.glyph.tiny { font-size: 7px; }
.script-button { padding: 0 10px; }
.combo {
  appearance: none;
  height: 15px;
  padding: 0 12px 0 2px;
  border: 1px solid #777;
  border-right-color: #ddd;
  border-bottom-color: #ddd;
  background: url("data:image/svg+xml,%3Csvg xmlns='http://www.w3.org/2000/svg' width='6' height='4'%3E%3Cpath d='M0 0h6L3 4z' fill='%23111'/%3E%3C/svg%3E") no-repeat right 2px center, linear-gradient(#f0f0f0, #dcdcdc);
  line-height: 13px;
}
.filter { width: 52px; align-self: flex-start; margin-top: 3px; }
.named-sets { width: 88px; align-self: flex-start; margin-top: 3px; color: #777; }

.workspace { flex: 1; display: grid; grid-template-columns: minmax(0, 1fr) 138px; }
.stage { display: flex; flex-direction: column; }
.viewport { position: relative; flex: 1; border: 2px solid #f4f000; background: #7d7d7d; overflow: hidden; }
.scene { position: absolute; inset: 0; width: 100%; height: 100%; }
.axis { font: 8px "DejaVu Sans", sans-serif; }
.view-label { position: absolute; left: 3px; top: 3px; display: flex; gap: 1px; color: #d8d8d8; }
.dialog { position: absolute; top: 32px; right: 19px; width: 153px; padding: 0 4px 3px; border: 1px solid #4b5560; border-radius: 4px 4px 0 0; background: #ccd9e8; }
.dialog-bar { display: flex; align-items: center; height: 18px; gap: 3px; }
.dialog-icon { width: 11px; height: 11px; background: #1d4b50; border-radius: 2px; }
.dialog-icon svg { display: block; width: 11px; height: 11px; }
.dialog-title { flex: 1; color: #4a5a6c; white-space: nowrap; font: 9px/12px var(--menu); }
.dialog-close { width: 23px; height: 12px; border: 1px solid #8d9cac; border-radius: 2px; background: #dbe5f0; }
.dialog-close svg { width: 12px; height: 10px; margin: auto; }
.dialog-body { padding: 5px 3px 3px; background: #bcbcbc; }
.exit { display: block; width: 100%; height: 24px; background: var(--yellow); border: 1px solid #807a68; border-right-color: #e8e2d0; border-bottom-color: #e8e2d0; }

.time-slider { display: flex; height: 14px; border-bottom: 1px solid #888; background: #bdbdbd; }
.step, .thumb { line-height: 11px; border: 1px solid var(--light); border-right-color: #777; border-bottom-color: #777; background: #c2c2c2; }
.step { width: 12px; }
.thumb { width: 94px; border-right: 2px solid #444; border-bottom-color: #444; }
.track { display: flex; height: 20px; padding-right: 41px; background: #c8c8c8; border-bottom: 1px solid #aaa; }
.track-toggle { width: 41px; padding: 2px 8px; background: var(--face); }
.track-toggle svg { width: 16px; height: 14px; }
.ruler { flex: 1; position: relative; }
.ticks { display: block; width: 100%; height: 18px; }
.ticks line { stroke: #8c8c8c; }
.minor { stroke-width: 8px; stroke-dasharray: 1.25 8.75; }
.major { stroke-width: 18px; stroke-dasharray: 1.25 48.75; }
.numbers { position: absolute; top: 0; bottom: 0; left: 0; right: 0; display: flex; justify-content: space-between; align-items: flex-end; }
.numbers span { display: flex; justify-content: center; width: 0; line-height: 9px; }
.numbers .current::before { content: ""; position: absolute; top: 0; left: -3px; width: 6px; height: 19px; background: rgb(70 120 160 / 50%); border: 1px solid #5b7f9b; }

.panel { display: flex; flex-direction: column; padding: 1px 6px 2px 4px; border-bottom: 1px solid #777; }
.tabs { display: flex; border-bottom: 1px solid var(--light); }
.tab { flex: 1; height: 18px; border: 1px solid var(--light); border-right-color: #8a8a8a; border-bottom: 0; }
.tab.active { border-top-color: #eee; }
.tab svg { width: 18px; height: 16px; margin: auto; }
.kinds { display: flex; justify-content: space-between; padding: 6px 0 4px 5px; }
.kinds button { width: 17px; height: 17px; }
.kinds svg { width: 16px; height: 16px; }
.category { margin: 1px 2px 5px 5px; height: 16px; }
.rollouts { flex: 1; border: 1px solid #999; border-right-color: var(--light); border-bottom-color: var(--light); padding: 3px 2px; }
.rollout { position: relative; margin: 5px 0 8px; border: 1px solid #8a8a8a; border-top: 0; box-shadow: 1px 1px #d6d6d6; padding: 0 3px 3px; }
.rollout-head { height: 7px; }
.rollout-head button { position: relative; top: -5px; width: 100%; height: 12px; line-height: 10px; border: 1px solid #444; background: #b4b4b4; }
.rollout-head span { float: left; padding-left: 3px; }
.options { display: grid; grid-template-columns: 10px 76px; column-gap: 6px; row-gap: 1px; justify-content: end; align-items: center; }
.options label { line-height: 12px; text-align: left; }
.tick { appearance: none; width: 9px; height: 9px; background: #eee; border: 1px solid #666; border-right-color: #ddd; border-bottom-color: #ddd; }
.tick:disabled { background: #bbb; }
.tick:checked { background: #fff url("data:image/svg+xml,%3Csvg xmlns='http://www.w3.org/2000/svg' width='7' height='7'%3E%3Cpath d='M1 3l2 2 3-4' fill='none' stroke='%23000' stroke-width='1.5'/%3E%3C/svg%3E") center no-repeat; }
.dim { color: #777; }
.options .start { text-align: center; background: var(--yellow); color: #807040; border: 1px solid #97906f; line-height: 10px; }
.types { display: grid; grid-template-columns: 1fr 1fr; gap: 2px 7px; padding: 2px 0 0 3px; }
.types button, .keys > button, .set-keys, .filters { border: 1px solid var(--light); border-right-color: #777; border-bottom-color: #777; background: #bcbcbc; }
.types button { height: 14px; line-height: 12px; }
.name-row { display: flex; gap: 3px; padding: 5px 0 0 2px; }
.field { border: 1px solid #333; border-right-color: #ddd; border-bottom-color: #ddd; background: #e2e2e2; height: 15px; padding: 0 1px; }
.name { flex: 1; }
.swatch { width: 13px; height: 15px; background: #e19df0; border: 1px solid #999; }

.status { display: flex; gap: 3px; height: 37px; padding: 2px 2px 0 1px; border-top: 1px solid #d6d6d6; }
.listener { display: flex; flex-direction: column; gap: 2px; width: 76px; padding-right: 3px; border-right: 1px solid #777; }
.listener input { height: 16px; padding: 0 0 0 3px; border: 1px solid #777; border-right-color: #eee; border-bottom-color: #eee; font: 9px/14px "Liberation Mono", monospace; }
.pink { background: #dcc3c5; }
.script { background: #fff; }
.messages { flex: 1; display: flex; flex-direction: column; gap: 3px; }
.line { display: flex; align-items: center; gap: 1px; height: 16px; }
.pane { height: 16px; line-height: 14px; padding: 0 4px; border: 1px solid #808080; border-right-color: #d8d8d8; border-bottom-color: #d8d8d8; text-align: left; white-space: nowrap; }
.grow { flex: 1; }
.side { width: 75px; }
.mini { width: 19px; height: 16px; }
.mini svg { width: 14px; height: 14px; margin: auto; }
.coord { display: flex; align-items: center; gap: 2px; }
.coord .field { width: 43px; }
.spin { display: flex; flex-direction: column; width: 8px; }
.spin button { width: 8px; height: 7px; border: 1px solid #d0d0d0; border-right-color: #888; border-bottom-color: #888; background: conic-gradient(from 140deg at 50% 20%, #222 80deg, transparent 0) ; }
.spin button + button { background: conic-gradient(from -40deg at 50% 80%, #222 80deg, transparent 0); }
.set-keys { width: 32px; height: 33px; }
.set-keys svg { width: 20px; height: 12px; margin: auto; }
.keys { display: grid; grid-template-columns: 36px 87px; grid-auto-rows: 16px; gap: 1px 3px; }
.keys .combo { height: 16px; }
.key-tools { display: flex; gap: 1px; }
.plain { width: 18px; }
.plain svg { width: 16px; height: 14px; }
.filters { flex: 1; }
.playback { position: relative; width: 163px; }
.transport { display: flex; align-items: center; justify-content: space-between; height: 17px; }
.transport > button, .transport svg { width: 16px; height: 14px; }
.transport .sep { margin: 0; }
.frame { width: 46px; }
.watermark { position: absolute; left: 0; bottom: 1px; color: #eee; text-shadow: 1px 1px 1px #555; font: 16px/18px "Liberation Sans", sans-serif; }
```
